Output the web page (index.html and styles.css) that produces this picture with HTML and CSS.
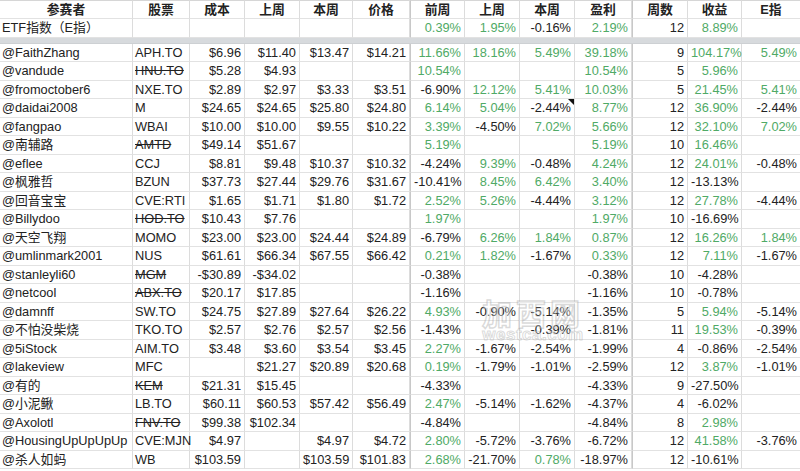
FILE: index.html
```html
<!DOCTYPE html>
<html lang="zh">
<head>
<meta charset="utf-8">
<title>ETF 比赛</title>
<link rel="stylesheet" href="styles.css">
</head>
<body>
<div class="page">
<table class="sheet">
<colgroup>
<col class="w-name"><col class="w-tick"><col class="w-55"><col class="w-55"><col class="w-53"><col class="w-57">
<col class="w-55"><col class="w-55"><col class="w-55"><col class="w-57"><col class="w-56"><col class="w-54"><col class="w-58">
</colgroup>
<thead>
<tr class="head">
<th>参赛者</th><th>股票</th><th>成本</th><th>上周</th><th>本周</th><th>价格</th><th class="sep">前周</th><th>上周</th><th>本周</th><th>盈利</th><th class="sep">周数</th><th>收益</th><th>E指</th>
</tr>
<tr>
<td class="l">ETF指数（E指）</td><td></td><td></td><td></td><td></td><td></td><td class="sep g">0.39%</td><td class="g">1.95%</td><td>-0.16%</td><td class="g">2.19%</td><td class="sep">12</td><td class="g">8.89%</td><td></td>
</tr>
<tr class="band"><td colspan="13"></td></tr>
</thead>
<tbody>
<tr><td class="l">@FaithZhang</td><td class="l">APH.TO</td><td>$6.96</td><td>$11.40</td><td>$13.47</td><td>$14.21</td><td class="sep g">11.66%</td><td class="g">18.16%</td><td class="g">5.49%</td><td class="g">39.18%</td><td class="sep">9</td><td class="g">104.17%</td><td class="g">5.49%</td></tr>
<tr><td class="l">@vandude</td><td class="l s">HNU.TO</td><td>$5.28</td><td>$4.93</td><td></td><td></td><td class="sep g">10.54%</td><td></td><td></td><td class="g">10.54%</td><td class="sep">5</td><td class="g">5.96%</td><td></td></tr>
<tr><td class="l">@fromoctober6</td><td class="l">NXE.TO</td><td>$2.89</td><td>$2.97</td><td>$3.33</td><td>$3.51</td><td class="sep">-6.90%</td><td class="g">12.12%</td><td class="g">5.41%</td><td class="g">10.03%</td><td class="sep">5</td><td class="g">21.45%</td><td class="g">5.41%</td></tr>
<tr><td class="l">@daidai2008</td><td class="l">M</td><td>$24.65</td><td>$24.65</td><td>$25.80</td><td>$24.80</td><td class="sep g">6.14%</td><td class="g">5.04%</td><td class="note">-2.44%</td><td class="g">8.77%</td><td class="sep">12</td><td class="g">36.90%</td><td>-2.44%</td></tr>
<tr><td class="l">@fangpao</td><td class="l">WBAI</td><td>$10.00</td><td>$10.00</td><td>$9.55</td><td>$10.22</td><td class="sep g">3.39%</td><td>-4.50%</td><td class="g">7.02%</td><td class="g">5.66%</td><td class="sep">12</td><td class="g">32.10%</td><td class="g">7.02%</td></tr>
<tr><td class="l">@南辅路</td><td class="l s">AMTD</td><td>$49.14</td><td>$51.67</td><td></td><td></td><td class="sep g">5.19%</td><td></td><td></td><td class="g">5.19%</td><td class="sep">10</td><td class="g">16.46%</td><td></td></tr>
<tr><td class="l">@eflee</td><td class="l">CCJ</td><td>$8.81</td><td>$9.48</td><td>$10.37</td><td>$10.32</td><td class="sep">-4.24%</td><td class="g">9.39%</td><td>-0.48%</td><td class="g">4.24%</td><td class="sep">12</td><td class="g">24.01%</td><td>-0.48%</td></tr>
<tr><td class="l">@枫雅哲</td><td class="l">BZUN</td><td>$37.73</td><td>$27.44</td><td>$29.76</td><td>$31.67</td><td class="sep">-10.41%</td><td class="g">8.45%</td><td class="g">6.42%</td><td class="g">3.40%</td><td class="sep">12</td><td>-13.13%</td><td></td></tr>
<tr><td class="l">@回音宝宝</td><td class="l">CVE:RTI</td><td>$1.65</td><td>$1.71</td><td>$1.80</td><td>$1.72</td><td class="sep g">2.52%</td><td class="g">5.26%</td><td>-4.44%</td><td class="g">3.12%</td><td class="sep">12</td><td class="g">27.78%</td><td>-4.44%</td></tr>
<tr><td class="l">@Billydoo</td><td class="l s">HOD.TO</td><td>$10.43</td><td>$7.76</td><td></td><td></td><td class="sep g">1.97%</td><td></td><td></td><td class="g">1.97%</td><td class="sep">10</td><td>-16.69%</td><td></td></tr>
<tr><td class="l">@天空飞翔</td><td class="l">MOMO</td><td>$23.00</td><td>$23.00</td><td>$24.44</td><td>$24.89</td><td class="sep">-6.79%</td><td class="g">6.26%</td><td class="g">1.84%</td><td class="g">0.87%</td><td class="sep">12</td><td class="g">16.26%</td><td class="g">1.84%</td></tr>
<tr><td class="l">@umlinmark2001</td><td class="l">NUS</td><td>$61.61</td><td>$66.34</td><td>$67.55</td><td>$66.42</td><td class="sep g">0.21%</td><td class="g">1.82%</td><td>-1.67%</td><td class="g">0.33%</td><td class="sep">12</td><td class="g">7.11%</td><td>-1.67%</td></tr>
<tr><td class="l">@stanleyli60</td><td class="l s">MGM</td><td>-$30.89</td><td>-$34.02</td><td></td><td></td><td class="sep">-0.38%</td><td></td><td></td><td>-0.38%</td><td class="sep">10</td><td>-4.28%</td><td></td></tr>
<tr><td class="l">@netcool</td><td class="l s">ABX.TO</td><td>$20.17</td><td>$17.85</td><td></td><td></td><td class="sep">-1.16%</td><td></td><td></td><td>-1.16%</td><td class="sep">10</td><td>-0.78%</td><td></td></tr>
<tr><td class="l">@damnff</td><td class="l">SW.TO</td><td>$24.75</td><td>$27.89</td><td>$27.64</td><td>$26.22</td><td class="sep g">4.93%</td><td>-0.90%</td><td>-5.14%</td><td>-1.35%</td><td class="sep">5</td><td class="g">5.94%</td><td>-5.14%</td></tr>
<tr><td class="l">@不怕没柴烧</td><td class="l">TKO.TO</td><td>$2.57</td><td>$2.76</td><td>$2.57</td><td>$2.56</td><td class="sep">-1.43%</td><td></td><td>-0.39%</td><td>-1.81%</td><td class="sep">11</td><td class="g">19.53%</td><td>-0.39%</td></tr>
<tr><td class="l">@5iStock</td><td class="l">AIM.TO</td><td>$3.48</td><td>$3.60</td><td>$3.54</td><td>$3.45</td><td class="sep g">2.27%</td><td>-1.67%</td><td>-2.54%</td><td>-1.99%</td><td class="sep">4</td><td>-0.86%</td><td>-2.54%</td></tr>
<tr><td class="l">@lakeview</td><td class="l">MFC</td><td></td><td>$21.27</td><td>$20.89</td><td>$20.68</td><td class="sep g">0.19%</td><td>-1.79%</td><td>-1.01%</td><td>-2.59%</td><td class="sep">12</td><td class="g">3.87%</td><td>-1.01%</td></tr>
<tr><td class="l">@有的</td><td class="l s">KEM</td><td>$21.31</td><td>$15.45</td><td></td><td></td><td class="sep">-4.33%</td><td></td><td></td><td>-4.33%</td><td class="sep">9</td><td>-27.50%</td><td></td></tr>
<tr><td class="l">@小泥鳅</td><td class="l">LB.TO</td><td>$60.11</td><td>$60.53</td><td>$57.42</td><td>$56.49</td><td class="sep g">2.47%</td><td>-5.14%</td><td>-1.62%</td><td>-4.37%</td><td class="sep">4</td><td>-6.02%</td><td></td></tr>
<tr><td class="l">@Axolotl</td><td class="l s">FNV.TO</td><td>$99.38</td><td>$102.34</td><td></td><td></td><td class="sep">-4.84%</td><td></td><td></td><td>-4.84%</td><td class="sep">8</td><td class="g">2.98%</td><td></td></tr>
<tr><td class="l">@HousingUpUpUpUp</td><td class="l">CVE:MJN</td><td>$4.97</td><td></td><td>$4.97</td><td>$4.72</td><td class="sep g">2.80%</td><td>-5.72%</td><td>-3.76%</td><td>-6.72%</td><td class="sep">12</td><td class="g">41.58%</td><td>-3.76%</td></tr>
<tr><td class="l">@杀人如蚂</td><td class="l">WB</td><td>$103.59</td><td></td><td>$103.59</td><td>$101.83</td><td class="sep g">2.68%</td><td>-21.70%</td><td class="g">0.78%</td><td>-18.97%</td><td class="sep">12</td><td>-10.61%</td><td></td></tr>
</tbody>
</table>
<div class="watermark"><span class="wm-cn">加西网</span><span class="wm-en">westca.com</span></div>
</div>
</body>
</html>
```

FILE: styles.css
```css
html, body {
  margin: 0;
  padding: 0;
  background: #ffffff;
}

.page {
  position: relative;
  width: 800px;
  height: 471px;
  overflow: hidden;
  font-family: "Liberation Sans", "Noto Sans CJK SC", sans-serif;
  font-size: 12.8px;
  color: #222222;
}

.sheet {
  width: 800px;
  table-layout: fixed;
  border-collapse: separate;
  border-spacing: 0;
}

.w-name { width: 133px; }
.w-tick { width: 57px; }
.w-55 { width: 55px; }
.w-53 { width: 53px; }
.w-57 { width: 57px; }
.w-56 { width: 56px; }
.w-54 { width: 54px; }
.w-58 { width: 58px; }

.sheet tr {
  height: 18.5px;
}

.sheet th,
.sheet td {
  box-sizing: border-box;
  padding: 0 3px 0 3px;
  line-height: 17px;
  border-right: 1px solid #dcdcdc;
  border-bottom: 1px solid #e2e2e2;
  white-space: nowrap;
  overflow: visible;
  text-align: right;
  vertical-align: middle;
}

.sheet th {
  font-weight: bold;
  text-align: center;
  color: #222222;
  border-top: 1px solid #d6d6d6;
}

.sheet th:last-child,
.sheet td:last-child {
  border-right: none;
}

.sheet .sep {
  border-left: 1px solid #c8c8c8;
}

.sheet .l {
  text-align: left;
  padding-left: 2px;
  padding-right: 0;
}

.sheet .g {
  color: #4faa66;
}

.sheet .s {
  text-decoration: line-through;
}

.sheet .note {
  position: relative;
}

.sheet .note::after {
  content: "";
  position: absolute;
  top: 0;
  right: 0;
  width: 0;
  height: 0;
  border-top: 6px solid #111111;
  border-left: 6px solid transparent;
}

.sheet tr.band {
  height: 6px;
}

.sheet tr.band td {
  padding: 0;
  line-height: 0;
  height: 6px;
  background: #d7dadd;
  border-bottom: 1px solid #cdd0d3;
  border-right: none;
}

.watermark {
  position: absolute;
  left: 480px;
  top: 296px;
  width: 106px;
  display: flex;
  flex-direction: column;
  align-items: center;
  pointer-events: none;
}

.wm-cn {
  font-family: "Noto Sans CJK SC", sans-serif;
  font-size: 30px;
  font-weight: bold;
  line-height: 32px;
  letter-spacing: 4px;
  color: rgba(255, 255, 255, 0.35);
  -webkit-text-stroke: 1.5px rgba(150, 150, 150, 0.35);
}

.wm-en {
  font-family: "Liberation Sans", sans-serif;
  font-size: 17px;
  font-weight: bold;
  line-height: 14px;
  letter-spacing: 0.5px;
  color: rgba(255, 255, 255, 0.35);
  -webkit-text-stroke: 1px rgba(150, 150, 150, 0.35);
}
```
